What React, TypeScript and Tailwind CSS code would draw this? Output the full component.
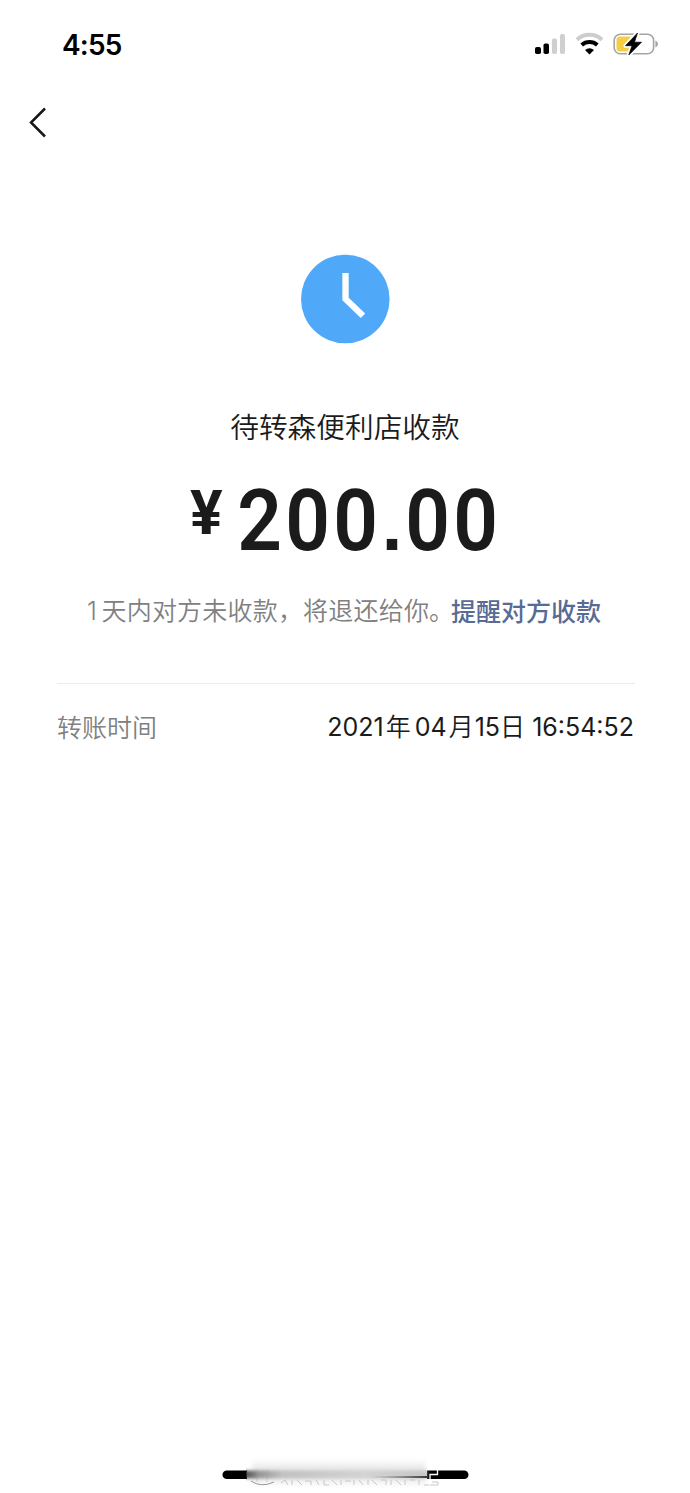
function StatusBar() {
  return (
    <header className="flex h-[88px] items-start justify-between pl-[62px] pr-[32px] pt-[29px]">
      <time className="font-['Inter',sans-serif] text-[28px] font-semibold leading-[32px] tracking-[-0.8px] text-black">4:55</time>
      <div className="flex h-[30px] items-center">
        <svg className="h-[30px] w-[124px]" viewBox="534 29 124 30" aria-label="Signal, Wi-Fi and battery">
          <rect x="535" y="47" width="6" height="7" rx="1.8" fill="#000" />
          <rect x="543.5" y="43.5" width="5.5" height="10.5" rx="1.8" fill="#000" />
          <rect x="552" y="38.5" width="5" height="15.5" rx="1.8" fill="#cfcfcf" />
          <rect x="560" y="34" width="5" height="20" rx="1.8" fill="#cfcfcf" />
          <path d="M577 39.7A18.5 18.5 0 0 1 602 39.7" fill="none" stroke="#cdcdcd" strokeWidth="4" />
          <path d="M581.7 45A11.8 11.8 0 0 1 597.3 45" fill="none" stroke="#000" strokeWidth="4" />
          <path d="M585 50Q589.5 46.6 594 50L589.5 54.6Z" fill="#000" />
          <rect x="614.2" y="34.2" width="39.4" height="19.6" rx="6" fill="#fff" stroke="#a4a4a4" strokeWidth="1.6" />
          <path d="M620 36.5H635V51.5H620Q616.5 51.5 616.5 48V40Q616.5 36.5 620 36.5Z" fill="#f5ce46" />
          <path d="M655.4 40.5Q658 41.8 658 44Q658 46.2 655.4 47.5Z" fill="#a4a4a4" />
          <path d="M637.5 33L625.5 45.7H632L628.8 55L641.5 42.2H634.5Z" fill="#fff" stroke="#fff" strokeWidth="4.2" strokeLinejoin="round" />
          <path d="M637.5 33L625.5 45.7H632L628.8 55L641.5 42.2H634.5Z" fill="#000" stroke="#000" strokeWidth=".7" strokeLinejoin="round" />
        </svg>
      </div>
    </header>
  );
}

function Digit({ value }: { value: string }) {
  if (value === ".") {
    return <span className="flex w-[24px] justify-center font-['Liberation_Sans',sans-serif] text-[74px] font-bold">.</span>;
  }
  return (
    <span className="flex w-[48px] justify-center">
      <span className="origin-center scale-x-[0.91]">{value}</span>
    </span>
  );
}

function HomeIndicator() {
  return (
    <svg className="h-[43px] w-[270px]" viewBox="210 1450 270 43" aria-hidden="true">
      <defs>
        <linearGradient id="fade" x1="246" x2="428" y1="0" y2="0" gradientUnits="userSpaceOnUse">
          <stop offset="0" stopColor="#333" />
          <stop offset=".07" stopColor="#888" />
          <stop offset=".2" stopColor="#bbb" />
          <stop offset=".65" stopColor="#d0d0d0" />
          <stop offset="1" stopColor="#c0c0c0" />
        </linearGradient>
        <linearGradient id="shade" x1="370" x2="428" y1="0" y2="0" gradientUnits="userSpaceOnUse">
          <stop offset="0" stopColor="#777" stopOpacity="0" />
          <stop offset="1" stopColor="#333" />
        </linearGradient>
        <filter id="soft" x="-10%" y="-60%" width="120%" height="220%"><feGaussianBlur stdDeviation="2 4" /></filter>
        <filter id="edge" x="-10%" y="-60%" width="120%" height="220%"><feGaussianBlur stdDeviation="0 1.6" /></filter>
      </defs>
      <rect x="222.5" y="1470.5" width="246" height="8.5" rx="4.25" fill="#000" />
      <rect x="247" y="1462" width="180" height="22" fill="#fff" />
      <rect x="252" y="1465" width="174" height="16" fill="#e3e3e3" filter="url(#soft)" />
      <rect x="246" y="1470.5" width="181" height="8" fill="url(#fade)" filter="url(#edge)" opacity=".85" />
      <rect x="370" y="1476" width="57" height="2" fill="url(#shade)" />
      <path d="M251 1481Q261 1488 274 1482" fill="none" stroke="#999" strokeWidth="1" />
      <path d="M257 1482V1470M267 1482V1470" stroke="#999" strokeWidth="1" opacity=".4" />
      <path d="M281 1483l4-3 3 5m4-5v5m5-5l5 5m3-4h6v4m5-5l3 5m5-5v5h5m3-5l5 5m4-5v5m4-4h6m3 4v-5m5 0l4 5m5-5v5m4-5l5 5m4-5h5v5m5-5v5m5-5l5 5m4-5v5m5-5h5m4 5v-5m5 5h5m3-3h6v3h-8" fill="none" stroke="#c8c8c8" strokeWidth="1" />
      <path d="M437.5 1470V1474.5H430V1482" fill="none" stroke="#fff" strokeWidth="1.3" />
    </svg>
  );
}

export default function App() {
  return (
    <main className="flex min-h-[1493px] w-[690px] flex-col bg-white font-['Inter','Noto_Sans_CJK_SC',sans-serif] text-[#1b1b1b]">
      <StatusBar />
      <nav className="flex h-[72px] pl-[27px] pt-[18px]">
        <button className="h-[34px] w-[22px]" aria-label="Back">
          <svg className="h-[34px] w-[22px]" viewBox="0 0 22 34" fill="none" stroke="#181818" strokeWidth="2.5">
            <path d="M18 2.5L4 16.5L18 30.5" />
          </svg>
        </button>
      </nav>
      <section className="flex flex-col items-center pt-[94px]">
        <svg className="h-[90px] w-[90px]" viewBox="300 254 90 90" aria-label="Pending">
          <circle cx="345.3" cy="299" r="44.3" fill="#50a9f8" />
          <path d="M345.5 273V299L363 315.8" fill="none" stroke="#fff" strokeWidth="6.3" />
        </svg>
        <h1 className="mt-[61px] h-[42px] whitespace-nowrap font-['Noto_Sans_CJK_SC',sans-serif] text-[28.7px] font-[350] leading-[42px]">待转森便利店收款</h1>
        <div className="flex h-[91px] w-[310px] items-start pt-[27px] font-['Roboto',sans-serif]">
          <span className="w-[49px] pt-[9px] text-[61px] font-bold leading-[60px]">¥</span>
          <span className="flex items-baseline whitespace-nowrap text-[86px] font-semibold leading-[93px]">
            <Digit value="2" />
            <Digit value="0" />
            <Digit value="0" />
            <Digit value="." />
            <Digit value="0" />
            <Digit value="0" />
          </span>
        </div>
      </section>
      <p className="mt-[53px] flex h-[38px] items-center whitespace-nowrap pl-[87px] font-['Noto_Sans_CJK_SC',sans-serif] text-[25px] leading-[38px] text-[#808080]">
        <span className="w-[364px] font-[350] tracking-[0.2px]"><span className="inline-block w-[14.5px] font-['Inter',sans-serif]">1</span>天内对方未收款，将退还给你。</span>
        <a className="font-medium text-[#576b95]">提醒对方收款</a>
      </p>
      <div className="ml-[57px] mr-[55px] mt-[54px] border-t border-[#ececec]" />
      <dl className="flex h-[86px] items-center justify-between pl-[57px] pr-[56px] text-[25px]">
        <dt className="font-['Noto_Sans_CJK_SC',sans-serif] font-[350] text-[#808080]">转账时间</dt>
        <dd className="flex whitespace-pre pt-[2px]">
          <span className="mr-[2px]">2021</span>
          <span className="mr-[4px] font-[350]">年</span>
          <span className="mr-[2px]">04</span>
          <span className="mr-[1px] font-[350]">月</span>
          <span>15</span>
          <span className="font-[350]">日</span>
          <span> 16:54:52</span>
        </dd>
      </dl>
      <footer className="mt-auto flex justify-center">
        <HomeIndicator />
      </footer>
    </main>
  );
}
